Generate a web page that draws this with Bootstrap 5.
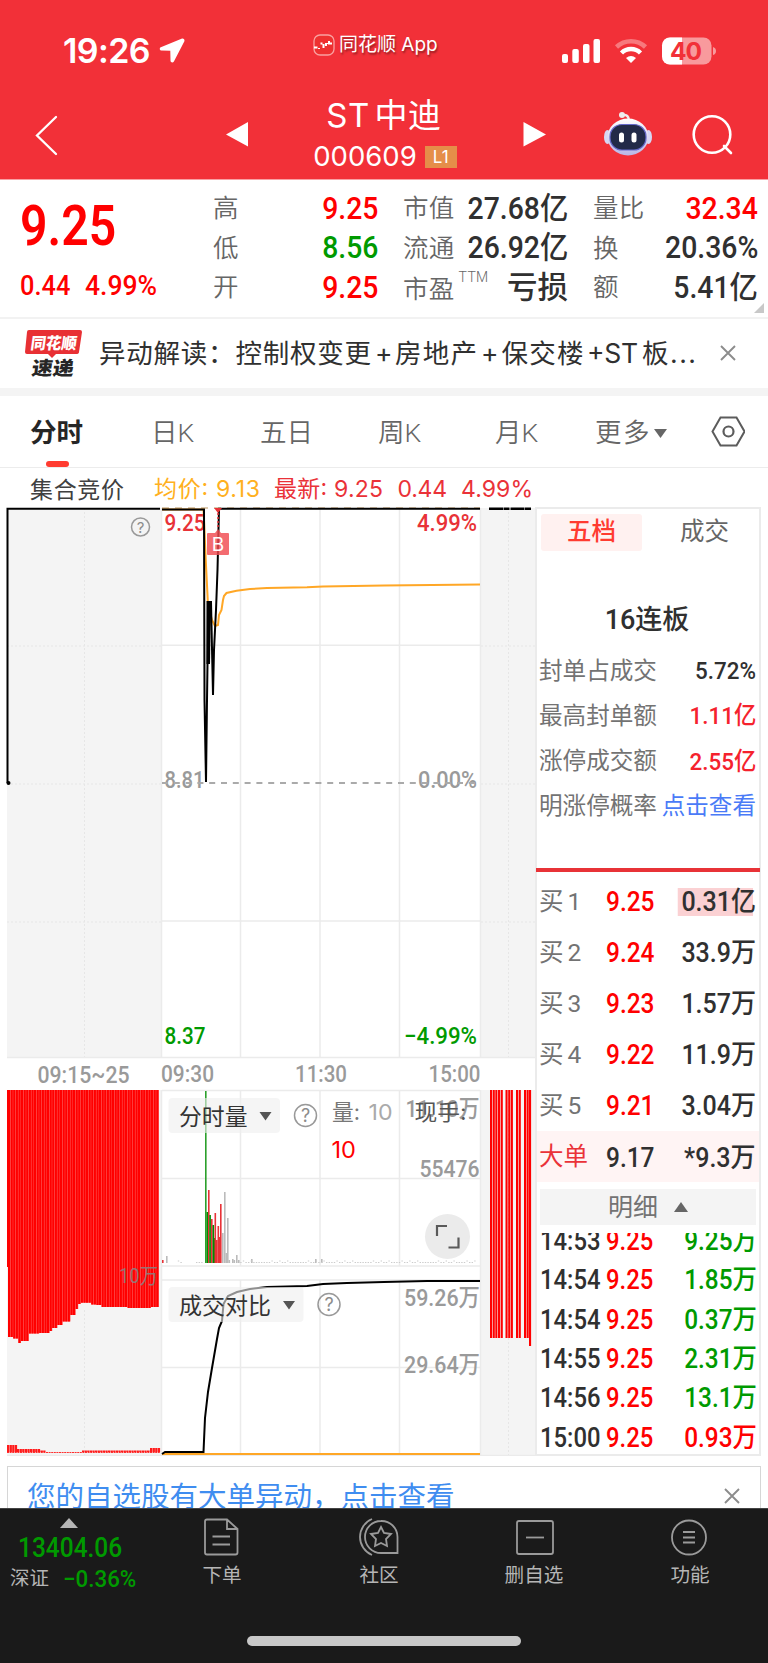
<!DOCTYPE html>
<html lang="zh-CN">
<head>
<meta charset="utf-8">
<meta name="viewport" content="width=device-width, initial-scale=1">
<title>ST中迪 000609</title>
<link href="https://cdn.jsdelivr.net/npm/bootstrap@5.3.0/dist/css/bootstrap.min.css" rel="stylesheet">
<style>
:root{--up:#f00;--down:#009a00;--ink:#303030;--dim:#666;--brand:#f23038}
body{font-family:Roboto,"Noto Sans CJK SC",sans-serif;color:var(--ink);background:#fff;line-height:1}
.app{width:768px;height:1663px;overflow:hidden}
.ui{font-family:Inter,"Noto Sans CJK SC",sans-serif}
.up{color:var(--up)}.down{color:var(--down)}.dim{color:var(--dim)}
svg{display:block;flex:none}
.app span,.app div{white-space:nowrap}
.topbar{height:180px;background:var(--brand);color:#fff;border-bottom:1px solid #f9a0a4}
.status{height:86px;padding:17px 48px 0 63px}
.clock{font-size:34px;font-weight:600;letter-spacing:-.6px;line-height:68px}
.appmark{font-size:19px;text-shadow:1px 2px 2px #0006;line-height:56px}
.titlebar{height:93px}
.stock{font-size:33px;line-height:40px;word-spacing:-5px;letter-spacing:.5px}
.code{font-size:27.5px;line-height:32px;margin-top:3px}
.lv{background:#e58e49;width:32px;height:22px;font-size:17px;line-height:22px}
/* narrow numerals, squeezed towards one edge */
.nr,.nl{display:inline-block;transform:scaleX(.93);transform-origin:right}
.nl{transform:scaleX(.89);transform-origin:left}
.quote{height:137px}
.big{font-size:55px;font-weight:600;line-height:60px}
.chg{font-size:28.5px;font-weight:500;line-height:32px}
.qrow{height:39.4px;font-size:30.5px;font-weight:500}
.qrow .dim{font-size:25.5px;font-weight:350;letter-spacing:.3px}
.ttm{align-self:flex-start;margin-top:2px}
.rule{height:2px;background:#f2f2f2}
.news{height:69px}
.band{height:8px;background:#f4f4f4}
.ktabs{height:72px;border-bottom:1px solid #ececec;font-size:26.5px;color:var(--dim);font-weight:350}
.ktabs .on{color:#262626;font-weight:600}
.kcol{height:71px;padding-top:4px}
.info{height:39px}
.depth{width:226px;height:949px;border:2px solid #ebebeb}
.depth>*{flex-shrink:0}
.tabpill{width:101px;height:37px;background:#fff1f0;color:#ff3b30;font-weight:500;border-radius:3px}
.fact{height:45.2px;font-size:23.6px;padding:0 3px 0 2px}
.fact span:first-child{color:#737373}
.fact b{font-weight:500;font-size:24.6px}
.lim{height:4px;background:#e83237;margin:0 -1px}
.bid{height:51.1px;font-size:27.5px;padding:1px 3px 0 2px}
.bid>span:first-child{width:67px;font-size:24.5px;color:#737373;word-spacing:-2px}
.bid b,.tick b{font-weight:500}
.bid .nr,.tick .nr,.fact .nr{transform:scaleX(.91)}
.hot{background:linear-gradient(90deg,#fbd1d3 96%,transparent 96%);padding-left:4px;height:28px;line-height:28px}
.block{background:#fff4f4}
.more{height:36px;margin:7px 3px 0 3px;background:#f4f4f4;font-size:25px;color:#737373}
.ticks{height:221px;overflow:hidden;margin-top:8px}
.tick{height:39.3px;font-size:26.8px;padding:0 2px 0 3px;font-weight:500}
.tclock{width:66px;flex:none}
.notice{height:42px;margin:10px 7px 0 7px;border:1px solid #d6d6d6;border-bottom:0;overflow:hidden;font-size:28.5px;color:#3f8df0;padding:2px 20px 0 19px}
.dock{height:155px;background:#1a1a1a;border-top:1px solid #444;color:#b5b5b5}
.dcol{width:156px;padding-top:8px;font-size:19.6px}
.homebar{width:274px;height:10px;border-radius:5px;background:#c8c8c8}
</style>
</head>
<body>
<div class="app d-flex flex-column">
  <header class="topbar d-flex flex-column ui flex-shrink-0">
    <div class="status d-flex align-items-start">
      <div class="clock" style="width:88px">19:26</div>
      <svg width="26" height="26" viewBox="0 0 26 26" class="ms-2 mt-4" style="transform:translateY(-3px)"><path d="M22.500.7 1.800 9.200c-1.600.8-1.200 3.200.6 3.300l8.900.2.2 10c.1 2 2.600 2.200 3.400.7L25.400 3.200C26 1.500 24.300 0 22.500.7Z" fill="#fff"/></svg>
      <div class="appmark d-flex align-items-center" style="margin-left:128px">
        <svg width="22" height="22" viewBox="0 0 22 22" class="me-1"><rect x="1" y="1" width="20" height="20" rx="6" fill="#ee3030" stroke="#f9a0a0" stroke-width="1.300"/><path d="M1 13.500h3.500M6 14v1M7.500 9.500h2M10.500 10v4M13 9v3M14.500 9v1M16 7v2.500h3" stroke="#fff" stroke-width="2" fill="none"/></svg>
        <span>同花顺 App</span>
      </div>
      <div class="d-flex ms-auto" style="padding-top:19px">
        <svg width="160" height="30" viewBox="560 36 160 30"><g fill="#fff"><rect x="562" y="54" width="6" height="9" rx="2"/><rect x="572.300" y="49" width="6.500" height="14" rx="2"/><rect x="583" y="44" width="6.500" height="19" rx="2"/><rect x="593.500" y="39" width="6.500" height="24" rx="2"/><path d="M626 58q5-4 10 0l-5 5z"/></g>
        <path d="M616.500 47a21 21 0 0 1 29 0" stroke="#f7797d" stroke-width="4.500" fill="none"/><path d="M621.500 53a13.500 13.500 0 0 1 19 0" stroke="#fff" stroke-width="4.500" fill="none"/>
        <clipPath id="half"><rect x="660" y="36" width="22" height="30"/></clipPath>
        <rect x="662" y="37.500" width="49.500" height="27" rx="8" fill="#f89a9d"/><rect x="662" y="37.500" width="49.500" height="27" rx="8" fill="#fff" clip-path="url(#half)"/><path d="M713 47q3 1 3 4t-3 4z" fill="#f89a9d"/>
        <text x="670" y="60" font-size="24.500" font-weight="700" fill="#f23038" textLength="32">40</text></svg>
      </div>
    </div>
    <div class="titlebar d-flex align-items-center position-relative">
      <svg width="768" height="93" viewBox="0 86 768 93" class="position-absolute"><path d="M56 117 37 135.500 56 154" fill="none" stroke="#fff" stroke-width="2.300" stroke-linecap="round"/><path d="M226 134.500 248 122v24.500zM546 134.500 523.500 122v24.500z" fill="#fff"/>
      <defs><linearGradient id="shell" x2="0" y2="1"><stop offset="0" stop-color="#fff"/><stop offset="1" stop-color="#b9b6e6"/></linearGradient></defs>
      <circle cx="622" cy="115" r="3" fill="#eee"/><path d="M622 115q7-1 7 6" fill="none" stroke="#eee" stroke-width="2.500"/><ellipse cx="607.500" cy="137" rx="3.500" ry="7" fill="#d7d6f4"/><ellipse cx="648.500" cy="137" rx="3.500" ry="7" fill="#d7d6f4"/><ellipse cx="628" cy="137" rx="20.500" ry="18.500" fill="url(#shell)"/><rect x="610" y="124.500" width="36" height="25.500" rx="12" fill="#222a48" stroke="#6568c9" stroke-width="1.200"/><rect x="619" y="132.500" width="5" height="10" rx="2.500" fill="#fff"/><rect x="631.500" y="132.500" width="5" height="10" rx="2.500" fill="#fff"/>
      <circle cx="712" cy="134.500" r="18.300" fill="none" stroke="#fff" stroke-width="2.600"/><path d="m724 146 7 7" stroke="#fff" stroke-width="2.600" stroke-linecap="round"/></svg>
      <div class="w-100 text-center" style="padding-top:4px">
        <div class="stock" style="line-height:36px">ST 中迪</div>
        <div class="code d-flex justify-content-center align-items-center" style="margin-top:7px"><span style="margin-left:2px">000609</span><span class="lv ms-2" style="margin-top:2px">L1</span></div>
      </div>
    </div>
  </header>

  <section class="quote d-flex flex-shrink-0 position-relative">
    <div style="width:213px;padding:16px 0 0 20px"><div class="big up"><span class="nl" style="transform:scaleX(.875)">9.25</span></div><div class="chg up d-flex" style="margin-top:14px;gap:8px"><span class="nl">0.44</span><span class="nl" style="transform:scaleX(.93)">4.99%</span></div></div>
    <div style="width:165px;padding-top:9.500px">
      <div class="qrow d-flex align-items-center justify-content-between"><span class="dim">高</span><span class="up nr">9.25</span></div>
      <div class="qrow d-flex align-items-center justify-content-between"><span class="dim">低</span><span class="down nr">8.56</span></div>
      <div class="qrow d-flex align-items-center justify-content-between"><span class="dim">开</span><span class="up nr">9.25</span></div>
    </div>
    <div style="width:165px;margin-left:25px;padding-top:9.500px">
      <div class="qrow d-flex align-items-center justify-content-between"><span class="dim">市值</span><span class="nr">27.68亿</span></div>
      <div class="qrow d-flex align-items-center justify-content-between"><span class="dim">流通</span><span class="nr">26.92亿</span></div>
      <div class="qrow d-flex align-items-center"><span class="dim" style="margin-top:3px">市盈</span><span class="dim ttm" style="font-size:14px;margin-left:4px">TTM</span><span class="ms-auto">亏损</span></div>
    </div>
    <div style="width:165px;margin-left:25px;padding-top:9.500px">
      <div class="qrow d-flex align-items-center justify-content-between"><span class="dim">量比</span><span class="up nr">32.34</span></div>
      <div class="qrow d-flex align-items-center justify-content-between"><span class="dim">换</span><span class="nr">20.36%</span></div>
      <div class="qrow d-flex align-items-center justify-content-between"><span class="dim">额</span><span class="nr">5.41亿</span></div>
    </div>
    <svg width="10" height="10" class="position-absolute end-0 bottom-0 me-1 mb-1"><path d="M10 0v10H0z" fill="#c8c8c8"/></svg>
  </section>
  <div class="rule flex-shrink-0"></div>
  <section class="news d-flex align-items-center flex-shrink-0">
    <svg width="60" height="50" viewBox="24 328 60 50" style="margin-left:24px"><path d="M29 329h51q2 0 2 2l-3 20q0 2-3 2H56l-4 4-4-4H27q-2 0-2-2l2-20q0-2 2-2z" fill="#e83034"/><text transform="translate(30 347.500) skewX(-8)" font-size="16" font-weight="900" fill="#fff" textLength="46" lengthAdjust="spacingAndGlyphs">同花顺</text><text transform="translate(31 373.500) skewX(-8)" font-size="19" font-weight="900" fill="#262626" textLength="42" lengthAdjust="spacingAndGlyphs">速递</text></svg>
    <svg width="600" height="40" viewBox="0 0 600 40" style="margin-left:15px"><g font-size="26.500" fill="#303030" class="ui"><text x="0" y="28.700" textLength="272">异动解读：控制权变更</text><text x="276" y="28.700">+</text><text x="296" y="28.700" textLength="82">房地产</text><text x="382" y="28.700">+</text><text x="402.500" y="28.700" textLength="82">保交楼</text><text x="488" y="28.700" textLength="51">+ST</text><text x="543" y="28.700">板</text><text x="571" y="28.700" textLength="26">...</text></g></svg>
    <svg width="16" height="16" viewBox="0 0 16 16" style="margin:-2px 0 0 21px"><path d="m1 1 14 14M15 1 1 15" stroke="#8c8c8c" stroke-width="1.900"/></svg>
  </section>
  <div class="band flex-shrink-0"></div>
  <nav class="ktabs d-flex flex-shrink-0 position-relative">
    <div class="kcol d-flex align-items-center on" style="padding-left:30px;width:151px">分时</div>
    <div class="kcol d-flex align-items-center" style="width:109px">日K</div>
    <div class="kcol d-flex align-items-center" style="width:118px">五日</div>
    <div class="kcol d-flex align-items-center" style="width:117px">周K</div>
    <div class="kcol d-flex align-items-center" style="width:100px">月K</div>
    <div class="kcol d-flex align-items-center" style="width:116px;letter-spacing:1.500px">更多<svg width="13" height="10" style="margin-left:3px"><path d="M0 0h13L6.500 9z" fill="#666"/></svg></div>
    <svg width="34" height="32" viewBox="711 415 34 32" style="margin-top:19px"><path d="M720.500 417.500h16l8 14-8 14h-16l-8-14z" fill="none" stroke="#5c5c5c" stroke-width="2"/><circle cx="728.500" cy="431.500" r="5" fill="none" stroke="#5c5c5c" stroke-width="2.200"/></svg>
    <div class="position-absolute rounded-pill" style="left:46px;bottom:0;width:23px;height:6px;background:#ff3b30"></div>
  </nav>
  <section class="info flex-shrink-0 ui">
    <svg width="768" height="39" viewBox="0 468 768 39"><g font-size="23"><text x="30" y="497.500" fill="#404040" textLength="94">集合竞价</text><text x="154" y="496.500" fill="#ffb020" textLength="106">均价: 9.13</text><g fill="#ea3238"><text x="274" y="496.500" textLength="109">最新: 9.25</text><text x="397.500" y="496.500" textLength="49.500">0.44</text><text x="461" y="496.500" textLength="72">4.99%</text></g></g></svg>
  </section>

  <main class="d-flex flex-shrink-0">
    <svg id="chart" width="535" height="949" viewBox="0 507 535 949">
      <g fill="#f4f4f4"><path d="M7 508h154v549H7zM481 508h54v549h-54zM7 1090h154v366H7zM481 1090h54v366h-54z"/></g>
      <g stroke="#e6e6e6" stroke-dasharray="2 2"><path d="M84.500 508v549M508.500 508v549M84.500 1310v146M508.500 1090v366M7 646h154M7 784h154M7 922h154M481 646h54M481 784h54M481 922h54"/></g>
      <g stroke="#ebebeb" stroke-width="1.500" fill="none"><path d="M240.500 508v549M320 508v549M399.500 508v549M162 645.300h318M162 921h318M7 1057.500h528M240.500 1091v175M320 1091v175M399.500 1091v175M162 1090.500h318M162 1178.500h318M162 1266h318M240.500 1280v176M320 1280v176M399.500 1280v176M162 1280h318M162 1367.500h318M7 1455.500h528M161.500 508v549M480.500 508v549M161.500 1090v366M480.500 1090v366"/></g>
      <g font-weight="500" font-size="24">
        <g fill="#9a9a9a"><text x="164.500" y="787.500" textLength="40">8.81</text><text x="418" y="787.500" textLength="59">0.00%</text><text x="161" y="1081.500" textLength="53">09:30</text><text x="295" y="1081.500" textLength="52">11:30</text><text x="428.500" y="1081.500" textLength="52">15:00</text><text x="37.500" y="1083" textLength="92">09:15~25</text></g>
        <path d="M162 783h313" stroke="#aaa" stroke-width="2" stroke-dasharray="6 5.800"/>
        <g fill="#e83237"><text x="164.500" y="530.500" textLength="41">9.25</text><text x="417" y="530.500" textLength="60">4.99%</text></g>
        <g fill="#009a00"><text x="164.500" y="1043.500" textLength="41">8.37</text><text x="404" y="1043.500" textLength="73">−4.99%</text></g>
      </g>
      <path d="M162 508h318" stroke="#dcc9ae" stroke-width="2" stroke-dasharray="7 6"/>
      <path d="M162 509.500h41.500L206 565l2 40 4 15 3 6 3-1 1-10 2.500-5 1.500-10 1-4 2.500-3 10-2.300 13.500-1.700 17-1 40-.7 16-.8 61-.9 96-1" fill="none" stroke="#ffa726" stroke-width="2"/>
      <path d="M7.500 783V508.800H160M162 509.500h42L204.500 700l1.500 82 1-82 .5-36 .5-62 .5 62 1-62 1.500 0 2 93 1-45 2-40 1.500-40 1.500-61.200H480" fill="none" stroke="#000" stroke-width="2"/>
      <path d="M206.500 601h4.500l-1 63h-3.500z"/><circle cx="8.500" cy="783" r="2"/><path d="M489 508.800h43" stroke="#000" stroke-width="2.500" stroke-dasharray="14 .5 6 1"/>
      <path d="M214 508h8l-4 5z" fill="#e83237"/><path d="M218 513v16" stroke="#e83237" stroke-dasharray="2 2" stroke-width="1.500"/>
      <path d="M208 533h7l3-4 3 4h7q1 0 1 1v20q0 1-1 1h-20q-1 0-1-1v-20q0-1 1-1z" fill="#f04a50" fill-opacity=".82"/><text x="218" y="551" text-anchor="middle" font-family="Inter" font-size="19" fill="#fff">B</text>
      <g fill="none" stroke="#999" stroke-width="1.500"><circle cx="140.500" cy="527" r="9"/><circle cx="305.500" cy="1115.500" r="11"/><circle cx="329" cy="1304.500" r="11"/></g>
      <g fill="#8c8c8c" text-anchor="middle" class="ui"><text x="140.500" y="532.500" font-size="15">?</text><text x="305.500" y="1122" font-size="18">?</text><text x="329" y="1311" font-size="18">?</text></g>
      <g id="bars"></g>
      <g font-size="24" fill="#9a9a9a" font-weight="500"><text x="405.500" y="1117" textLength="74">11.10万</text><text x="419.500" y="1177" textLength="60">55476</text><text x="404" y="1306" textLength="76">59.26万</text><text x="404" y="1372.500" textLength="76">29.64万</text></g>
      <text x="119" y="1282.500" font-size="21" fill="#858585" fill-opacity=".85" textLength="39">10万</text>
      <path d="M162 1454h318" stroke="#ffa726" stroke-width="2"/>
      <path d="m162 1454 3-2h38.500l1.500-34 3-26 4-24 5-29 2-11 3-7 1.500-17 4.500-8 9-4 13-3 17-2 40-1 16-2 24-1 37-1 43-1h53" fill="none" stroke="#000" stroke-width="2"/>
      <g fill="#efefef" fill-opacity=".6"><rect x="168.500" y="1098" width="111.500" height="35" rx="4"/><rect x="168.500" y="1287" width="135" height="35" rx="4"/></g>
      <g fill="#333" font-size="23"><text x="179" y="1124.500" textLength="68.500">分时量</text><text x="179" y="1313.500" textLength="92">成交对比</text></g>
      <path d="M259.500 1112h12l-6 8.500zM283 1301h12l-6 8.500z" fill="#555"/>
      <g class="ui" font-size="22"><text x="332" y="1120" fill="#777" textLength="28">量:</text><text x="368.500" y="1120" fill="#aaa" textLength="24">10</text><text x="414.500" y="1120" fill="#555" textLength="52">现手:</text><text x="331.500" y="1157.500" font-size="23" fill="#f00" textLength="24.500">10</text></g>
      <circle cx="447.500" cy="1236.500" r="22.500" fill="#ebebeb"/><path d="M437 1236v-10h10M448.500 1247.500h10v-10" fill="none" stroke="#5a5a5a" stroke-width="2.200"/>
    </svg>

    <aside class="depth d-flex flex-column">
      <div class="d-flex align-items-center" style="font-size:24.500px;padding:5px 0 0 4px"><span class="tabpill d-flex align-items-center justify-content-center">五档</span><span class="dim" style="margin-left:38px">成交</span></div>
      <div class="text-center" style="font-size:27px;font-weight:500;height:76px;padding-top:50px;margin-bottom:22px;line-height:38px;padding-right:2px">16连板</div>
      <div class="fact d-flex align-items-center justify-content-between"><span>封单占成交</span><b class="nr">5.72%</b></div>
      <div class="fact d-flex align-items-center justify-content-between"><span>最高封单额</span><b class="nr" style="color:#f5222d">1.11亿</b></div>
      <div class="fact d-flex align-items-center justify-content-between"><span>涨停成交额</span><b class="nr" style="color:#f5222d">2.55亿</b></div>
      <div class="fact d-flex align-items-center justify-content-between"><span>明涨停概率</span><span style="color:#4a7bf7">点击查看</span></div>
      <div class="lim" style="margin-top:38px;margin-bottom:4px"></div>
      <div class="bid d-flex align-items-center"><span>买 1</span><b class="up nl">9.25</b><b class="ms-auto hot nr">0.31亿</b></div>
      <div class="bid d-flex align-items-center"><span>买 2</span><b class="up nl">9.24</b><b class="ms-auto nr">33.9万</b></div>
      <div class="bid d-flex align-items-center"><span>买 3</span><b class="up nl">9.23</b><b class="ms-auto nr">1.57万</b></div>
      <div class="bid d-flex align-items-center"><span>买 4</span><b class="up nl">9.22</b><b class="ms-auto nr">11.9万</b></div>
      <div class="bid d-flex align-items-center"><span>买 5</span><b class="up nl">9.21</b><b class="ms-auto nr">3.04万</b></div>
      <div class="bid block d-flex align-items-center"><span style="color:#ea3238">大单</span><b class="nl">9.17</b><b class="ms-auto nr">*9.3万</b></div>
      <div class="more d-flex align-items-center justify-content-center">明细<svg width="14" height="10" class="ms-3"><path d="M7 0l7 10H0z" fill="#666"/></svg></div>
      <div class="ticks"><div style="margin-top:-11.500px">
        <div class="tick d-flex align-items-center"><span class="tclock"><span class="nl">14:53</span></span><b class="up nl">9.25</b><b class="down ms-auto nr">9.25万</b></div>
        <div class="tick d-flex align-items-center"><span class="tclock"><span class="nl">14:54</span></span><b class="up nl">9.25</b><b class="down ms-auto nr">1.85万</b></div>
        <div class="tick d-flex align-items-center"><span class="tclock"><span class="nl">14:54</span></span><b class="up nl">9.25</b><b class="down ms-auto nr">0.37万</b></div>
        <div class="tick d-flex align-items-center"><span class="tclock"><span class="nl">14:55</span></span><b class="up nl">9.25</b><b class="down ms-auto nr">2.31万</b></div>
        <div class="tick d-flex align-items-center"><span class="tclock"><span class="nl">14:56</span></span><b class="up nl">9.25</b><b class="down ms-auto nr">13.1万</b></div>
        <div class="tick d-flex align-items-center"><span class="tclock"><span class="nl">15:00</span></span><b class="up nl">9.25</b><b class="up ms-auto nr">0.93万</b></div>
      </div></div>
    </aside>
  </main>

  <section class="notice d-flex align-items-start justify-content-between flex-shrink-0"><span style="line-height:58px">您的自选股有大单异动，点击查看</span><svg width="16" height="16" viewBox="0 0 16 16" style="margin-top:19px"><path d="m1 1 14 14M15 1 1 15" stroke="#8c8c8c" stroke-width="1.900"/></svg></section>

  <footer class="dock d-flex flex-column align-items-center flex-shrink-0">
    <div class="d-flex w-100" style="height:127px">
      <div style="width:144px;padding-top:9px">
        <svg width="18" height="10" style="margin-left:60px"><path d="M9 0l9 10H0z" fill="#b5b5b5"/></svg>
        <div class="down" style="font-size:27.500px;line-height:36px;margin-left:18px;font-weight:500;margin-top:2px"><span class="nl">13404.06</span></div>
        <div class="d-flex align-items-center" style="height:26px;margin-left:10px;font-size:19.500px"><span>深证</span><span class="down nl" style="margin-left:14px;font-size:24px;font-weight:500;transform:scaleX(.93)">−0.36%</span></div>
      </div>
      <div class="dcol d-flex flex-column align-items-center"><svg width="40" height="40" viewBox="-20 -20 40 40" fill="none" stroke="#9a9a9a" stroke-width="1.800"><path d="M-14.500-17.500H5L15.500-8V15.500q0 2-2 2H-15q-2 0-2-2V-15.500q0-2 2-2zM5-17.500V-8H15.500M-9.500-.5H8M-9.500 7.500H8"/></svg><span style="margin-top:9px">下单</span></div>
      <div class="dcol d-flex flex-column align-items-center" style="padding-left:2px"><svg width="44" height="40" viewBox="-22 -20 44 40" fill="none" stroke="#9a9a9a" stroke-width="1.800"><path d="M-7-18A19.500 19.500 0 0 0-7 18M2-16A16 16 0 1 0 2 16H18.500V0A16 16 0 0 0 2-16z"/><path d="m2-10 3 6 7 1-5 5 1 7-6-3-6 3 1-7-5-5 7-1z"/></svg><span style="margin-top:9px">社区</span></div>
      <div class="dcol d-flex flex-column align-items-center"><svg width="40" height="40" viewBox="-20 -20 40 40" fill="none" stroke="#9a9a9a" stroke-width="1.800"><rect x="-17" y="-16" width="36" height="33" rx="2"/><path d="M-8 .5H10"/></svg><span style="margin-top:9px">删自选</span></div>
      <div class="dcol d-flex flex-column align-items-center"><svg width="40" height="40" viewBox="-20 -20 40 40" fill="none" stroke="#9a9a9a" stroke-width="1.800"><circle cx="-1" cy=".5" r="17"/><path d="M-7-5H5M-7 .5H5M-7 5.500H5"/></svg><span style="margin-top:9px">功能</span></div>
    </div>
    <div class="homebar"></div>
  </footer>
</div>
<script src="https://cdn.jsdelivr.net/npm/bootstrap@5.3.0/dist/js/bootstrap.bundle.min.js"></script>
<script>
document.querySelectorAll('#chart text[textLength]').forEach(t => t.setAttribute('lengthAdjust', 'spacingAndGlyphs'));
const bars = document.getElementById('bars');
function bar(x, y, w, h, fill){
  const r = document.createElementNS('http://www.w3.org/2000/svg', 'rect');
  r.setAttribute('x', x); r.setAttribute('y', y); r.setAttribute('width', w); r.setAttribute('height', h); r.setAttribute('fill', fill);
  bars.appendChild(r);
}
// call-auction order volume: [right edge, bottom]
const auction = [[8,1267],[13,1337],[17,1338.500],[19.500,1343],[29,1341],[38,1333.500],[40,1335],[50,1333],[52,1331],[56,1328],[61,1325],[71,1321.500],[76,1315],[78,1309],[81,1304],[90,1302.700],[96,1304.500],[102,1305],[126,1307],[150,1308],[170,1307]];
bar(7, 1090, 1.200, 177, '#f00');
for (let x = 8, i = 0; x < 159; x += 2.600) {
  while (auction[i][0] < x + .8) i++;
  const w = Math.min(2.600, 159 - x);
  bar(x, 1090, w, auction[i][1] - 1090, '#ff4a4a');
  bar(x, 1090, Math.min(2.100, w), auction[i][1] - 1090, '#f00');
}
[[7,10,1445],[17,21,1449],[38,6,1450.500],[82,68,1450.500],[150,9,1448]].forEach(([x, w, y]) => { for (let i = 0; i < w; i += 2.600) bar(x + i, y, 2.300, 1452 - y, '#ff1a1a'); });
for (let x = 7; x < 159; x += 2.600) bar(x, 1452, 2, 1, '#ff3030');
// closing auction
[490,492.700,495.300,498,500.700,505.500,508.200,510.800,516,518.700,524,526.600].forEach(x => bar(x, 1090, 2.100, 248, '#f00'));
bar(529, 1090, 2.100, 256, '#f00');
// minute volume: [x, top, colour]
[[162,1260,'#e83237'],[166,1256,'#bbb'],[205,1091,'#2ca02c'],[206.500,1212,'#008a00'],[208,1190,'#e83237'],[209.300,1215,'#008a00'],[211,1219,'#e83237'],[212.500,1225,'#008a00'],[213.500,1238,'#008a00'],[214.500,1213,'#e83237'],[216,1240,'#e83237'],[217.500,1226,'#e83237'],[218.500,1237,'#e83237'],[220,1204,'#e83237'],[222,1233,'#bbb'],[224,1192,'#bbb'],[225.500,1253,'#bbb'],[227,1218,'#bbb'],[228.500,1260,'#bbb'],[232,1259,'#bbb'],[233.500,1260,'#bbb'],[236,1255,'#bbb'],[238,1260,'#bbb'],[251,1259,'#bbb'],[315,1259,'#bbb'],[321,1259,'#bbb']].forEach(([x, y, c]) => bar(x, y, 1.600, 1263 - y, c));
for (let x = 170; x < 475; x += 2.600) if (x < 203 ? x % 3 < 1 : x > 240) bar(x, 1262 - (x * 7 % 5 > 3.800 ? 1.500 : 0), 1.400, 1, '#ccc');
</script>
</body>
</html>
